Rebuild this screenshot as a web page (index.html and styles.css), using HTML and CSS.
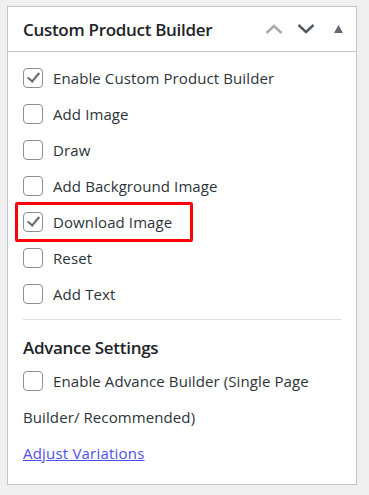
FILE: index.html
```html
<!DOCTYPE html>
<html lang="en">
<head>
  <meta charset="UTF-8">
  <title>Custom Product Builder</title>
  <meta name="viewport" content="width=device-width, initial-scale=1.0">
  <link rel="stylesheet" href="styles.css">
</head>
<body>
  <div class="postbox">
    <!-- หัวกล่อง -->
    <div class="postbox-header">
      <h2>Custom Product Builder</h2>
      <div class="handle-actions">
        <svg class="move up" width="18" height="10" viewBox="0 0 18 10"><path d="M1.5 9 L9 2 L16.5 9" fill="none" stroke="currentColor" stroke-width="2.4"/></svg>
        <svg class="move down" width="18" height="10" viewBox="0 0 18 10"><path d="M1.5 1 L9 8 L16.5 1" fill="none" stroke="currentColor" stroke-width="2.4"/></svg>
        <svg class="toggle" width="9" height="8" viewBox="0 0 9 8"><path d="M4.5 0 L9 8 L0 8 Z" fill="currentColor"/></svg>
      </div>
    </div>

    <div class="inside">
      <label class="row"><span class="box checked"></span>Enable Custom Product Builder</label>
      <label class="row"><span class="box"></span>Add Image</label>
      <label class="row"><span class="box"></span>Draw</label>
      <label class="row"><span class="box"></span>Add Background Image</label>
      <label class="row marked"><span class="box checked"></span>Download Image<span class="highlight"></span></label>
      <label class="row"><span class="box"></span>Reset</label>
      <label class="row"><span class="box"></span>Add Text</label>

      <hr>

      <h3>Advance Settings</h3>
      <label class="row"><span class="box"></span>Enable Advance Builder (Single Page Builder/ Recommended)</label>
      <a class="link" href="#">Adjust Variations</a>
    </div>
  </div>
</body>
</html>
```

FILE: styles.css
```css
body {
  margin: 0;
  padding: 6px 12px 0 7px;
  background: #f0f0f1;
  font-family: 'Open Sans', 'Noto Sans', sans-serif;
  color: #2c3338;
  font-size: 15px;
}

/* กล่องหลัก */
.postbox {
  width: 348px;
  height: 477px;
  background: #fff;
  border: 1px solid #c3c4c7;
}
.postbox-header {
  height: 44px;
  border-bottom: 1px solid #c3c4c7;
  display: flex;
  align-items: center;
  justify-content: space-between;
  padding: 0 13px 0 15px;
}
.postbox-header h2 {
  margin: 0;
  font-size: 17px;
  font-weight: 600;
  color: #1d2327;
  letter-spacing: -0.3px;
}
.handle-actions {
  display: flex;
  align-items: center;
  gap: 14px;
}
.move.up { color: #a7aaad; }
.move.down { color: #50575e; }
.toggle { color: #646970; margin-left: 5px; }

/* เนื้อหา */
.inside {
  padding: 8px 15px 0 15px;
}
.row {
  display: block;
  line-height: 36px;
  position: relative;
  letter-spacing: 0.1px;
}
.box {
  display: inline-block;
  width: 18px;
  height: 18px;
  border: 1px solid #8c8f94;
  border-radius: 4px;
  margin-right: 10px;
  vertical-align: middle;
  position: relative;
  top: -2px;
}
.box.checked::after {
  content: "";
  position: absolute;
  left: 6px;
  top: 1px;
  width: 5px;
  height: 10px;
  border: solid #646970;
  border-width: 0 2.5px 2.5px 0;
  transform: rotate(40deg);
}
.highlight {
  position: absolute;
  left: -8px;
  top: -2px;
  width: 172px;
  height: 34px;
  border: 3px solid #ff0000;
  border-radius: 2px;
}

hr {
  border: 0;
  border-top: 1px solid #dcdcde;
  margin: 7px 0 0 0;
}
h3 {
  margin: 16px 0 4px 0;
  font-size: 17px;
  font-weight: 600;
  color: #1d2327;
  letter-spacing: -0.3px;
}
.link {
  display: inline-block;
  line-height: 36px;
  color: #4f4ff0;
  letter-spacing: 0.2px;
}
```
